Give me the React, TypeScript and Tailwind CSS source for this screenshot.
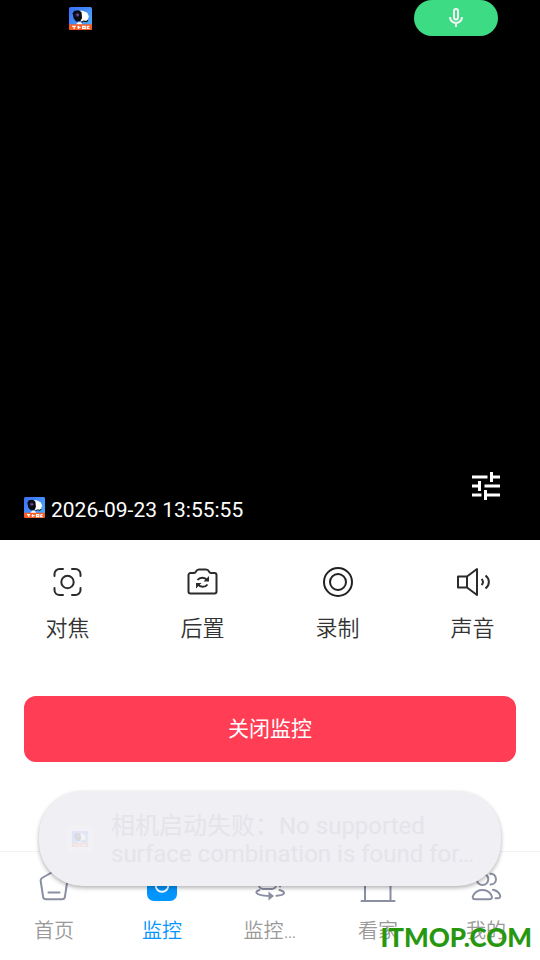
import type { ReactNode } from "react";

type IconProps = { className?: string };

// camera badge used in the status bar, the video overlay and the toast
function AppLogo({ className }: IconProps) {
  return (
    <svg viewBox="0 0 22 22" className={className} aria-hidden="true">
      <defs>
        <linearGradient id="sky" x1="0" y1="0" x2="1" y2="1">
          <stop offset="0" stopColor="#3b6df8" />
          <stop offset="1" stopColor="#4fb4fb" />
        </linearGradient>
      </defs>
      <rect width="22" height="22" rx="1.5" fill="url(#sky)" />
      <path d="M9 3.500 13 3.500l4.500 2L19 9l-1.500 4-3 1-4-1z" fill="#fff" />
      <path d="M12 14.500 14 13.500l3 .5 1-1.500" stroke="#0b0b12" fill="none" />
      <path d="M8.500 14.500h3l1.500 2.500H6.500z" fill="#fff" />
      <path d="M5 3.500 9.500 3l2.500 2 .5 5.500-1.500 3-4 .5-2.500-3L3.500 6z" fill="#0b0b12" />
      <circle cx="8" cy="7.500" r="1.800" fill="#3a326a" />
      <circle cx="8.500" cy="7.500" r=".8" fill="#9a5ab8" />
      <path d="M0 16.500h22v4a1.500 1.500 0 0 1-1.500 1.500h-19A1.500 1.500 0 0 1 0 20.500z" fill="#fb5a24" />
      <path
        d="M3 18.500h3.500M5 18.500V21M9 18v3M8 19.500h3M13 18.500h2.500v2H13zM17.500 18.500v2h2M17.500 18.500h2"
        stroke="#fff"
        strokeWidth="1.2"
        fill="none"
      />
    </svg>
  );
}

function MicIcon({ className }: IconProps) {
  return (
    <svg viewBox="0 0 24 24" className={className} fill="none" stroke="#f1f3f4" strokeWidth="2" aria-hidden="true">
      <rect x="10" y="3" width="4" height="10.500" rx="2" />
      <path d="M6 11a6 6 0 0 0 12 0M12 17v4" />
    </svg>
  );
}

function TuneIcon({ className }: IconProps) {
  return (
    <svg viewBox="0 0 28 28" className={className} fill="none" stroke="#fff" strokeWidth="3" aria-hidden="true">
      <path d="M0 5h15.500M19.500 5H28M19.500 0v10M0 14h9M12.500 14H28M7.500 9v10M0 23h9.500M13.500 23H28M13.500 18v10" />
    </svg>
  );
}

function FocusIcon() {
  return (
    <svg viewBox="0 0 32 32" className="size-8" fill="none" stroke="#2b2b2b" strokeWidth="2" strokeLinecap="round" aria-hidden="true">
      <path d="M2.500 10V8a5 5 0 0 1 5-5h3.500M20 3h3.500a5 5 0 0 1 5 5v2M28.500 22v2a5 5 0 0 1-5 5H20M11 29H7.500a5 5 0 0 1-5-5v-2" />
      <circle cx="15.500" cy="16" r="6.200" />
    </svg>
  );
}

function FlipCameraIcon() {
  return (
    <svg viewBox="0 0 32 32" className="size-8" fill="none" stroke="#2b2b2b" strokeWidth="2" strokeLinejoin="round" aria-hidden="true">
      <path d="M3.500 7H7c1 0 1.500-.5 2-1.500.7-1.500 1.500-2 3-2h7c1.500 0 2.300.5 3 2 .5 1 1 1.500 2 1.500h3.500a2 2 0 0 1 2 2v16.500a2 2 0 0 1-2 2h-24a2 2 0 0 1-2-2V9a2 2 0 0 1 2-2z" />
      <path d="M10.500 14c2.500-3.300 7.500-3 9.500.2M20.500 18.500c-2.500 3.300-7.500 3-9.500-.2" />
      <path d="M22 10v5.500h-5.500zM9 22.500V17h5.500z" fill="#2b2b2b" stroke="none" />
    </svg>
  );
}

function RecordIcon() {
  return (
    <svg viewBox="0 0 32 32" className="size-8" fill="none" stroke="#222" strokeWidth="2" aria-hidden="true">
      <circle cx="16" cy="16" r="14" />
      <circle cx="16" cy="16" r="8" />
    </svg>
  );
}

function SoundIcon() {
  return (
    <svg viewBox="0 0 32 32" className="size-8 overflow-visible" fill="none" stroke="#2b2b2b" strokeWidth="2" strokeLinejoin="round" aria-hidden="true">
      <path d="M1 10.500h9v11H1zM10 10.500 20 3v26L10 21.500" />
      <path d="M24.500 13c2 1.800 2 4.200 0 6M28.500 9.500c4.500 3.500 4.500 9.500 0 13" />
    </svg>
  );
}

function HomeIcon() {
  return (
    <svg viewBox="0 0 32 32" className="size-8" fill="none" stroke="#8a8fa3" strokeWidth="2" strokeLinejoin="round" aria-hidden="true">
      <path d="M14.500 2 4 8a3 3 0 0 0-1.300 3l2.400 15.800A3 3 0 0 0 8 29.300h16a3 3 0 0 0 2.900-2.500L29.300 11A3 3 0 0 0 28 8L17.500 2a3 3 0 0 0-3 0z" />
      <path d="M10.500 22.500h11" strokeLinecap="round" />
    </svg>
  );
}

function MonitorIcon() {
  return (
    <svg viewBox="0 0 32 32" className="size-8" aria-hidden="true">
      <rect x="1" y="1" width="30" height="30" rx="7" fill="#0095ff" />
      <circle cx="16" cy="15.500" r="6.300" fill="none" stroke="#fff" strokeWidth="2" />
    </svg>
  );
}

function OrbitCameraIcon() {
  return (
    <svg viewBox="0 0 32 32" className="size-8" fill="none" stroke="#8a8fa3" strokeWidth="2" strokeLinecap="round" aria-hidden="true">
      <rect x="5" y="2" width="17" height="17" rx="4" />
      <path d="M26 7v9.500" />
      <path d="M5.500 20C-1 22 2.500 26 17 26M25.500 20c7 2 6 5-3 5.800" />
      <path d="m14.500 21.500 5.500 4.500-5.500 4.500z" fill="#8a8fa3" stroke="none" />
    </svg>
  );
}

function DoorIcon() {
  return (
    <svg viewBox="0 0 36 32" className="h-8 w-9" fill="none" stroke="#8a8fa3" strokeWidth="2" strokeLinecap="round" aria-hidden="true">
      <path d="M5 31V5a3 3 0 0 1 3-3h19.500a3 3 0 0 1 3 3v26M1.500 31h33" />
    </svg>
  );
}

function PeopleIcon() {
  return (
    <svg viewBox="0 0 32 32" className="size-8" fill="none" stroke="#8a8fa3" strokeWidth="2" strokeLinecap="round" aria-hidden="true">
      <circle cx="12.500" cy="9.300" r="5.800" />
      <path d="M20.500 3.800c2.500-.3 5.500 2 5.500 5.200 0 3.500-2.500 5.500-5.500 5.500" />
      <path d="M5 29.300h14.500c3 0 3-2.500 1.500-4.800-4-6-13-6-17.200 0C2.200 26.800 2.200 29.300 5 29.300z" />
      <path d="M23 19.700c3.500.8 6 3 7 5.300.8 2-.3 3.300-2.500 3.300H25.500" />
    </svg>
  );
}

const actions: { label: string; icon: ReactNode }[] = [
  { label: "对焦", icon: <FocusIcon /> },
  { label: "后置", icon: <FlipCameraIcon /> },
  { label: "录制", icon: <RecordIcon /> },
  { label: "声音", icon: <SoundIcon /> },
];

const tabs: { label: string; icon: ReactNode; active?: boolean }[] = [
  { label: "首页", icon: <HomeIcon /> },
  { label: "监控", icon: <MonitorIcon />, active: true },
  { label: "监控…", icon: <OrbitCameraIcon /> },
  { label: "看家", icon: <DoorIcon /> },
  { label: "我的", icon: <PeopleIcon /> },
];

export default function App() {
  return (
    <main className="relative flex min-h-screen w-full flex-col bg-white font-[Roboto,'Noto_Sans_CJK_SC',sans-serif]">
      <section className="flex h-[540px] flex-col justify-between bg-black text-white">
        <div className="flex h-9 items-center justify-between pr-[42px] pl-[69px]">
          <AppLogo className="size-[23px]" />
          <div className="flex h-9 w-[84px] items-center justify-center rounded-full bg-[#3ddc84]">
            <MicIcon className="size-6" />
          </div>
        </div>
        <div className="flex items-start justify-between pr-10 pb-[17px] pl-6">
          <div className="flex items-start gap-1.5 pt-[25px]">
            <AppLogo className="size-[21px]" />
            <time className="text-[21px] leading-[26px]">2026-09-23 13:55:55</time>
          </div>
          <button type="button" aria-label="设置">
            <TuneIcon className="size-7" />
          </button>
        </div>
      </section>

      <div className="grid grid-cols-4 pt-[26px]">
        {actions.map((a) => (
          <button key={a.label} type="button" className="flex flex-col items-center gap-[15px] text-[22px] leading-8 font-[350] text-[#333]">
            {a.icon}
            {a.label}
          </button>
        ))}
      </div>

      <div className="px-6 pt-[51px]">
        <button type="button" className="h-[66px] w-full rounded-xl bg-[#ff3d54] pt-0.5 text-[21px] text-white">
          关闭监控
        </button>
      </div>

      <nav className="mt-auto grid h-[109px] grid-cols-5 border-t border-[#f3f3f3] pt-[18px]">
        {tabs.map((t) => (
          <a
            key={t.label}
            href="#"
            aria-current={t.active ? "page" : undefined}
            className={`flex flex-col items-center gap-[13px] text-xl leading-8 font-[350] ${
              t.active ? "text-[#0095ff]" : "text-[#999]"
            }`}
          >
            {t.icon}
            {t.label}
          </a>
        ))}
      </nav>

      <div
        role="status"
        className="absolute inset-x-[39px] bottom-[74px] flex h-[95px] items-center gap-[18px] rounded-[44px] bg-[#f0eff4] pr-5 pl-7 shadow-[0_2px_4px_rgba(0,0,0,0.3)]"
      >
        <div className="flex size-[26px] shrink-0 items-center justify-center bg-[#f2f1f6]">
          <AppLogo className="size-4 opacity-10" />
        </div>
        <p className="pt-0.5 text-2xl leading-7 text-[#e5e4e9]">
          相机启动失败：No supported surface combination is found for…
        </p>
      </div>

      <p className="absolute right-2 bottom-[5px] font-[Lato,sans-serif] text-[26px] leading-9 font-black text-[#279710]">
        ITMOP.COM
      </p>
    </main>
  );
}
